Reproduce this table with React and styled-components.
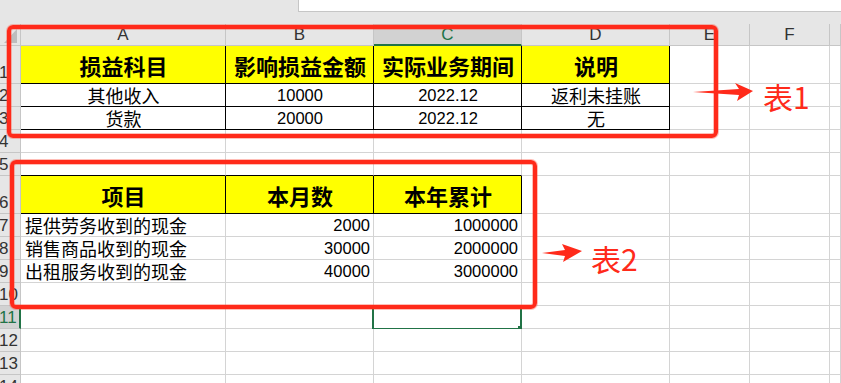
import React from 'react';
import styled, { createGlobalStyle } from 'styled-components';

const GlobalStyle = createGlobalStyle`
    body {
        margin: 0;
        background: #fff;
        overflow: hidden;
        font-family: "Liberation Sans", "Noto Sans CJK SC", sans-serif;
    }
`;

const RED = '#ff2a1a';
const GREEN = '#217346';

const Page = styled.div`
    position: relative;
    width: 841px;
    height: 383px;
    overflow: hidden;
`;

const TopBar = styled.div`
    height: 24px;
    background: #e6e6e6;
    display: flex;
    align-items: flex-start;
`;

const FormulaBox = styled.div`
    margin-left: 298px;
    flex: 1;
    height: 11px;
    background: #fff;
    border-left: 1px solid #c6c6c6;
    border-bottom: 1px solid #c6c6c6;
`;

const Sheet = styled.div`
    display: grid;
    grid-template-columns: 21px 205px 148px 148px 148px 80px 80px 1fr;
    grid-template-rows: 22px 38px 23px 23px 23px 23px 38px repeat(8, 23px);
`;

const Corner = styled.div`
    position: relative;
    box-sizing: border-box;
    background: #e6e6e6;
    border-right: 1px solid #c6c6c6;
    border-bottom: 1px solid #c6c6c6;

    &::after {
        content: "";
        position: absolute;
        right: 3px;
        bottom: 2px;
        border-style: solid;
        border-width: 0 0 14px 13px;
        border-color: transparent transparent #bdbdbd transparent;
    }
`;

const ColHead = styled.div`
    box-sizing: border-box;
    display: flex;
    align-items: center;
    justify-content: center;
    background: ${p => (p.$active ? '#d2d2d2' : '#e6e6e6')};
    border-right: 1px solid #c6c6c6;
    border-bottom: ${p => (p.$active ? `2px solid ${GREEN}` : '1px solid #c6c6c6')};
    color: ${p => (p.$active ? GREEN : '#333')};
    font-family: "Liberation Sans", sans-serif;
    font-size: 17px;
    padding-top: 1px;
`;

const RowHead = styled.div`
    box-sizing: border-box;
    display: flex;
    align-items: flex-end;
    overflow: hidden;
    background: ${p => (p.$active ? '#d2d2d2' : '#e6e6e6')};
    border-right: ${p => (p.$active ? `2px solid ${GREEN}` : '1px solid #c6c6c6')};
    border-bottom: 1px solid #c6c6c6;
    color: ${p => (p.$active ? GREEN : '#333')};
    font-family: "Liberation Sans", sans-serif;
    font-size: 17px;
    line-height: 1;
    padding-bottom: 2px;
    margin-left: -1px;
`;

const Cell = styled.div`
    position: relative;
    box-sizing: border-box;
    display: flex;
    align-items: center;
    justify-content: ${p => (p.$align === 'left' ? 'flex-start' : p.$align === 'right' ? 'flex-end' : 'center')};
    padding: 0 3px 0 4px;
    border-right: 1px solid ${p => (p.$box ? '#000' : '#d4d4d4')};
    border-bottom: 1px solid ${p => (p.$box || p.$edge ? '#000' : '#d4d4d4')};
    background: ${p => (p.$head ? '#ffff00' : '#fff')};
    color: #000;
    font-family: ${p => (p.$num ? '"Liberation Sans", sans-serif' : '"Noto Sans CJK SC", sans-serif')};
    font-size: ${p => (p.$head ? '22px' : p.$num ? '16.5px' : '18px')};
    font-weight: ${p => (p.$head ? 700 : 400)};
    line-height: 1;
    white-space: nowrap;

    ${p => p.$sel && `
        &::before {
            content: "";
            position: absolute;
            top: -1px;
            left: -2px;
            right: -1px;
            bottom: -2px;
            border: 2px solid ${GREEN};
        }
        &::after {
            content: "";
            position: absolute;
            right: -3px;
            bottom: -4px;
            width: 6px;
            height: 6px;
            background: ${GREEN};
        }
    `}
`;

const Frame = styled.div`
    position: absolute;
    box-sizing: border-box;
    left: ${p => p.$x}px;
    top: ${p => p.$y}px;
    width: ${p => p.$w}px;
    height: ${p => p.$h}px;
    border: 4px solid ${RED};
    border-radius: 6px;
    box-shadow: 0 0 0 1px rgba(255, 70, 50, 0.35), inset 0 0 0 1px rgba(255, 70, 50, 0.35);
`;

const ArrowSvg = styled.svg`
    position: absolute;
    left: ${p => p.$x}px;
    top: ${p => p.$y}px;
`;

const Label = styled.div`
    position: absolute;
    left: ${p => p.$x}px;
    top: ${p => p.$y}px;
    color: ${RED};
    font-family: "Noto Sans CJK SC", sans-serif;
    font-size: 30px;
    line-height: 30px;
`;

const COLS = ['A', 'B', 'C', 'D', 'E', 'F', 'G'];

const head = { $head: true, $box: true };
const t1 = { $box: true };

// row -> cells for columns A.. (anything missing is blank)
const DATA = {
    1: [
        { text: '损益科目', ...head },
        { text: '影响损益金额', ...head },
        { text: '实际业务期间', ...head },
        { text: '说明', ...head },
    ],
    2: [
        { text: '其他收入', ...t1 },
        { text: '10000', $num: true, ...t1 },
        { text: '2022.12', $num: true, ...t1 },
        { text: '返利未挂账', ...t1 },
    ],
    3: [
        { text: '货款', ...t1 },
        { text: '20000', $num: true, ...t1 },
        { text: '2022.12', $num: true, ...t1 },
        { text: '无', ...t1 },
    ],
    5: [{ $edge: true }, { $edge: true }, { $edge: true }],
    6: [
        { text: '项目', ...head },
        { text: '本月数', ...head },
        { text: '本年累计', ...head },
    ],
    7: [
        { text: '提供劳务收到的现金', $align: 'left' },
        { text: '2000', $num: true, $align: 'right' },
        { text: '1000000', $num: true, $align: 'right' },
    ],
    8: [
        { text: '销售商品收到的现金', $align: 'left' },
        { text: '30000', $num: true, $align: 'right' },
        { text: '2000000', $num: true, $align: 'right' },
    ],
    9: [
        { text: '出租服务收到的现金', $align: 'left' },
        { text: '40000', $num: true, $align: 'right' },
        { text: '3000000', $num: true, $align: 'right' },
    ],
    11: [{}, {}, { $sel: true }],
};

const ROWS = Array.from({ length: 14 }, (_, i) => i + 1);

const App = () => {
    return (
        <Page>
            <GlobalStyle />
            <TopBar>
                <FormulaBox />
            </TopBar>
            <Sheet>
                <Corner />
                {COLS.map(c => (
                    <ColHead key={c} $active={c === 'C'}>{c === 'G' ? '' : c}</ColHead>
                ))}
                {ROWS.map(r => (
                    <React.Fragment key={r}>
                        <RowHead $active={r === 11}>{r}</RowHead>
                        {COLS.map((c, i) => {
                            const { text, ...props } = (DATA[r] && DATA[r][i]) || {};
                            return (
                                <Cell key={c} {...props}>{text}</Cell>
                            );
                        })}
                    </React.Fragment>
                ))}
            </Sheet>

            <Frame $x={7} $y={25} $w={711} $h={113} />
            <Frame $x={10} $y={160} $w={527} $h={149} />

            <ArrowSvg $x={690} $y={80} width="66" height="26" viewBox="0 0 66 26">
                <polygon points="3,12 49,9 45,3 63,11 47,21 49,15" fill={RED} />
            </ArrowSvg>
            <Label $x={763} $y={81}>表1</Label>

            <ArrowSvg $x={538} $y={240} width="48" height="26" viewBox="0 0 48 26">
                <polygon points="4,13 27,10 24,4 44,11 25,22 27,16" fill={RED} />
            </ArrowSvg>
            <Label $x={591} $y={243}>表2</Label>
        </Page>
    );
};

export default App;
